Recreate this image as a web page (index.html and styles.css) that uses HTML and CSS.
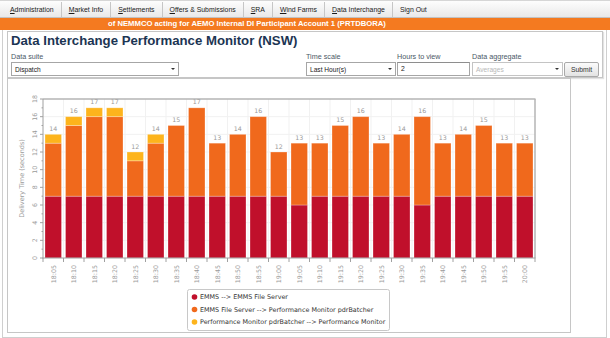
FILE: index.html
```html
<!DOCTYPE html>
<html>
<head>
<meta charset="utf-8">
<link rel="stylesheet" href="styles.css">
</head>
<body>
<div class="nav">
  <a><u>A</u>dministration</a>
  <a><u>M</u>arket Info</a>
  <a><u>S</u>ettlements</a>
  <a><u>O</u>ffers &amp; Submissions</a>
  <a><u>S</u>RA</a>
  <a><u>W</u>ind Farms</a>
  <a><u>D</u>ata Interchange</a>
  <a class="last">Sign Out</a>
</div>
<div class="banner">of NEMMCO acting for AEMO Internal DI Participant Account 1 (PRTDBORA)</div>
<div class="frame">
  <div class="panel head">
    <h1>Data Interchange Performance Monitor (NSW)</h1>
    <div class="form">
      <div class="field suite">
        <label>Data suite</label>
        <div class="select">Dispatch<i class="caret"></i></div>
      </div>
      <div class="right">
        <div class="field time">
          <label>Time scale</label>
          <div class="select">Last Hour(s)<i class="caret"></i></div>
        </div>
        <div class="field hours">
          <label>Hours to view</label>
          <div class="input">2</div>
        </div>
        <div class="field agg">
          <label>Data aggregate</label>
          <div class="select disabled">Averages<i class="caret"></i></div>
        </div>
        <div class="btn">Submit</div>
      </div>
    </div>
  </div>
  <div class="panel chart">
    <svg width="562" height="253" viewBox="0 0 562 253">
      <g class="grid">
        <line x1="35" y1="37.67" x2="527" y2="37.67"/>
        <line x1="35" y1="55.33" x2="527" y2="55.33"/>
        <line x1="35" y1="73" x2="527" y2="73"/>
        <line x1="35" y1="90.67" x2="527" y2="90.67"/>
        <line x1="35" y1="108.33" x2="527" y2="108.33"/>
        <line x1="35" y1="126" x2="527" y2="126"/>
        <line x1="35" y1="143.67" x2="527" y2="143.67"/>
        <line x1="35" y1="161.33" x2="527" y2="161.33"/>
        <line x1="55.5" y1="20" x2="55.5" y2="179"/>
        <line x1="76" y1="20" x2="76" y2="179"/>
        <line x1="96.5" y1="20" x2="96.5" y2="179"/>
        <line x1="117" y1="20" x2="117" y2="179"/>
        <line x1="137.5" y1="20" x2="137.5" y2="179"/>
        <line x1="158" y1="20" x2="158" y2="179"/>
        <line x1="178.5" y1="20" x2="178.5" y2="179"/>
        <line x1="199" y1="20" x2="199" y2="179"/>
        <line x1="219.5" y1="20" x2="219.5" y2="179"/>
        <line x1="240" y1="20" x2="240" y2="179"/>
        <line x1="260.5" y1="20" x2="260.5" y2="179"/>
        <line x1="281" y1="20" x2="281" y2="179"/>
        <line x1="301.5" y1="20" x2="301.5" y2="179"/>
        <line x1="322" y1="20" x2="322" y2="179"/>
        <line x1="342.5" y1="20" x2="342.5" y2="179"/>
        <line x1="363" y1="20" x2="363" y2="179"/>
        <line x1="383.5" y1="20" x2="383.5" y2="179"/>
        <line x1="404" y1="20" x2="404" y2="179"/>
        <line x1="424.5" y1="20" x2="424.5" y2="179"/>
        <line x1="445" y1="20" x2="445" y2="179"/>
        <line x1="465.5" y1="20" x2="465.5" y2="179"/>
        <line x1="486" y1="20" x2="486" y2="179"/>
        <line x1="506.5" y1="20" x2="506.5" y2="179"/>
      </g>
      <g class="frameline">
        <line x1="35" y1="20" x2="527.5" y2="20"/>
        <line x1="527" y1="20" x2="527" y2="179"/>
      </g>
      <g class="bars">
        <rect class="r" x="37" y="117.17" width="16.5" height="61.83"/><rect class="o" x="37" y="64.17" width="16.5" height="53"/><rect class="y" x="37" y="55.33" width="16.5" height="8.84"/>
        <rect class="r" x="57.5" y="117.17" width="16.5" height="61.83"/><rect class="o" x="57.5" y="46.5" width="16.5" height="70.67"/><rect class="y" x="57.5" y="37.67" width="16.5" height="8.83"/>
        <rect class="r" x="78" y="117.17" width="16.5" height="61.83"/><rect class="o" x="78" y="37.67" width="16.5" height="79.5"/><rect class="y" x="78" y="28.83" width="16.5" height="8.84"/>
        <rect class="r" x="98.5" y="117.17" width="16.5" height="61.83"/><rect class="o" x="98.5" y="37.67" width="16.5" height="79.5"/><rect class="y" x="98.5" y="28.83" width="16.5" height="8.84"/>
        <rect class="r" x="119" y="117.17" width="16.5" height="61.83"/><rect class="o" x="119" y="81.83" width="16.5" height="35.34"/><rect class="y" x="119" y="73" width="16.5" height="8.83"/>
        <rect class="r" x="139.5" y="117.17" width="16.5" height="61.83"/><rect class="o" x="139.5" y="64.17" width="16.5" height="53"/><rect class="y" x="139.5" y="55.33" width="16.5" height="8.84"/>
        <rect class="r" x="160" y="117.17" width="16.5" height="61.83"/><rect class="o" x="160" y="46.5" width="16.5" height="70.67"/>
        <rect class="r" x="180.5" y="117.17" width="16.5" height="61.83"/><rect class="o" x="180.5" y="28.83" width="16.5" height="88.34"/>
        <rect class="r" x="201" y="117.17" width="16.5" height="61.83"/><rect class="o" x="201" y="64.17" width="16.5" height="53"/>
        <rect class="r" x="221.5" y="117.17" width="16.5" height="61.83"/><rect class="o" x="221.5" y="55.33" width="16.5" height="61.84"/>
        <rect class="r" x="242" y="117.17" width="16.5" height="61.83"/><rect class="o" x="242" y="37.67" width="16.5" height="79.5"/>
        <rect class="r" x="262.5" y="117.17" width="16.5" height="61.83"/><rect class="o" x="262.5" y="73" width="16.5" height="44.17"/>
        <rect class="r" x="283" y="126" width="16.5" height="53"/><rect class="o" x="283" y="64.17" width="16.5" height="61.83"/>
        <rect class="r" x="303.5" y="117.17" width="16.5" height="61.83"/><rect class="o" x="303.5" y="64.17" width="16.5" height="53"/>
        <rect class="r" x="324" y="117.17" width="16.5" height="61.83"/><rect class="o" x="324" y="46.5" width="16.5" height="70.67"/>
        <rect class="r" x="344.5" y="117.17" width="16.5" height="61.83"/><rect class="o" x="344.5" y="37.67" width="16.5" height="79.5"/>
        <rect class="r" x="365" y="117.17" width="16.5" height="61.83"/><rect class="o" x="365" y="64.17" width="16.5" height="53"/>
        <rect class="r" x="385.5" y="117.17" width="16.5" height="61.83"/><rect class="o" x="385.5" y="55.33" width="16.5" height="61.84"/>
        <rect class="r" x="406" y="126" width="16.5" height="53"/><rect class="o" x="406" y="37.67" width="16.5" height="88.33"/>
        <rect class="r" x="426.5" y="117.17" width="16.5" height="61.83"/><rect class="o" x="426.5" y="64.17" width="16.5" height="53"/>
        <rect class="r" x="447" y="117.17" width="16.5" height="61.83"/><rect class="o" x="447" y="55.33" width="16.5" height="61.84"/>
        <rect class="r" x="467.5" y="117.17" width="16.5" height="61.83"/><rect class="o" x="467.5" y="46.5" width="16.5" height="70.67"/>
        <rect class="r" x="488" y="117.17" width="16.5" height="61.83"/><rect class="o" x="488" y="64.17" width="16.5" height="53"/>
        <rect class="r" x="508.5" y="117.17" width="16.5" height="61.83"/><rect class="o" x="508.5" y="64.17" width="16.5" height="53"/>
      </g>
      <g class="vals">
        <text x="45.25" y="51.8">14</text>
        <text x="65.75" y="34.2">16</text>
        <text x="86.25" y="25.3">17</text>
        <text x="106.75" y="25.3">17</text>
        <text x="127.25" y="69.5">12</text>
        <text x="147.75" y="51.8">14</text>
        <text x="168.25" y="43">15</text>
        <text x="188.75" y="25.3">17</text>
        <text x="209.25" y="60.7">13</text>
        <text x="229.75" y="51.8">14</text>
        <text x="250.25" y="34.2">16</text>
        <text x="270.75" y="69.5">12</text>
        <text x="291.25" y="60.7">13</text>
        <text x="311.75" y="60.7">13</text>
        <text x="332.25" y="43">15</text>
        <text x="352.75" y="34.2">16</text>
        <text x="373.25" y="60.7">13</text>
        <text x="393.75" y="51.8">14</text>
        <text x="414.25" y="34.2">16</text>
        <text x="434.75" y="60.7">13</text>
        <text x="455.25" y="51.8">14</text>
        <text x="475.75" y="43">15</text>
        <text x="496.25" y="60.7">13</text>
        <text x="516.75" y="60.7">13</text>
      </g>
      <g class="axis">
        <line x1="35" y1="20" x2="35" y2="179.5"/>
        <line x1="34.5" y1="179" x2="527.5" y2="179"/>
        <path d="M32 179H35M32 161.33H35M32 143.67H35M32 126H35M32 108.33H35M32 90.67H35M32 73H35M32 55.33H35M32 37.67H35M32 20H35"/>
        <path d="M33.5 170.17H35M33.5 152.5H35M33.5 134.83H35M33.5 117.17H35M33.5 99.5H35M33.5 81.83H35M33.5 64.17H35M33.5 46.5H35M33.5 28.83H35"/>
        <path d="M35 179V183M55.5 179V183M76 179V183M96.5 179V183M117 179V183M137.5 179V183M158 179V183M178.5 179V183M199 179V183M219.5 179V183M240 179V183M260.5 179V183M281 179V183M301.5 179V183M322 179V183M342.5 179V183M363 179V183M383.5 179V183M404 179V183M424.5 179V183M445 179V183M465.5 179V183M486 179V183M506.5 179V183M527 179V183"/>
      </g>
      <g class="ylab">
        <text transform="translate(28.5 179) rotate(-90)">0</text>
        <text transform="translate(28.5 161.33) rotate(-90)">2</text>
        <text transform="translate(28.5 143.67) rotate(-90)">4</text>
        <text transform="translate(28.5 126) rotate(-90)">6</text>
        <text transform="translate(28.5 108.33) rotate(-90)">8</text>
        <text transform="translate(28.5 90.67) rotate(-90)">10</text>
        <text transform="translate(28.5 73) rotate(-90)">12</text>
        <text transform="translate(28.5 55.33) rotate(-90)">14</text>
        <text transform="translate(28.5 37.67) rotate(-90)">16</text>
        <text transform="translate(28.5 20) rotate(-90)">18</text>
      </g>
      <text class="ytitle" transform="translate(15.5 99.5) rotate(-90)">Delivery Time (seconds)</text>
      <g class="xlab">
        <text transform="translate(47.5 186) rotate(-90)">18:05</text>
        <text transform="translate(68 186) rotate(-90)">18:10</text>
        <text transform="translate(88.5 186) rotate(-90)">18:15</text>
        <text transform="translate(109 186) rotate(-90)">18:20</text>
        <text transform="translate(129.5 186) rotate(-90)">18:25</text>
        <text transform="translate(150 186) rotate(-90)">18:30</text>
        <text transform="translate(170.5 186) rotate(-90)">18:35</text>
        <text transform="translate(191 186) rotate(-90)">18:40</text>
        <text transform="translate(211.5 186) rotate(-90)">18:45</text>
        <text transform="translate(232 186) rotate(-90)">18:50</text>
        <text transform="translate(252.5 186) rotate(-90)">18:55</text>
        <text transform="translate(273 186) rotate(-90)">19:00</text>
        <text transform="translate(293.5 186) rotate(-90)">19:05</text>
        <text transform="translate(314 186) rotate(-90)">19:10</text>
        <text transform="translate(334.5 186) rotate(-90)">19:15</text>
        <text transform="translate(355 186) rotate(-90)">19:20</text>
        <text transform="translate(375.5 186) rotate(-90)">19:25</text>
        <text transform="translate(396 186) rotate(-90)">19:30</text>
        <text transform="translate(416.5 186) rotate(-90)">19:35</text>
        <text transform="translate(437 186) rotate(-90)">19:40</text>
        <text transform="translate(457.5 186) rotate(-90)">19:45</text>
        <text transform="translate(478 186) rotate(-90)">19:50</text>
        <text transform="translate(498.5 186) rotate(-90)">19:55</text>
        <text transform="translate(519 186) rotate(-90)">20:00</text>
      </g>
      <g class="legend">
        <rect class="lbox" x="179.5" y="210.5" width="202" height="41" rx="2"/>
        <circle class="r" cx="186.5" cy="218" r="2.8"/>
        <circle class="o" cx="186.5" cy="230.5" r="2.8"/>
        <circle class="y" cx="186.5" cy="243" r="2.8"/>
        <text x="192" y="220.3">EMMS --&gt; EMMS File Server</text>
        <text x="192" y="232.8">EMMS File Server --&gt; Performance Monitor pdrBatcher</text>
        <text x="192" y="245.3">Performance Monitor pdrBatcher --&gt; Performance Monitor</text>
      </g>
    </svg>
  </div>
</div>
</body>
</html>
```
FILE: styles.css
```css
* { box-sizing: border-box; }
body {
  margin: 0;
  font-family: "Liberation Sans", Arial, sans-serif;
  background: #fff;
}
.nav {
  height: 18px;
  display: flex;
  align-items: center;
  padding-left: 3px;
  background: linear-gradient(#fdfdfd, #e9e9e9);
  border-top: 1px solid #d6d6d6;
  border-bottom: 1px solid #c2c2c2;
}
.nav a {
  font-size: 6.9px;
  color: #1a1a1a;
  padding: 0 7px;
  line-height: 15px;
  border-right: 1px solid #c6c6c6;
  white-space: nowrap;
}
.nav a u { text-decoration: underline; }
.nav a.last { border-right: 0; }
.banner {
  height: 12px;
  background: #f47a20;
  color: #fff;
  font-weight: bold;
  font-size: 7.7px;
  line-height: 12px;
  padding-left: 108px;
  white-space: nowrap;
  overflow: hidden;
}
.frame {
  margin-left: 2px;
  width: 605px;
  height: 308px;
  border: 1px solid #cfcfcf;
  border-top: 0;
  padding: 1px 0 0 4px;
}
.panel {
  border: 1px solid #c6c6c6;
  background: #fff;
}
.head {
  width: 596px;
  height: 47px;
  padding: 1px 3px 1px 3px;
  box-shadow: 1px 1px 1px #e2e2e2;
}
h1 {
  margin: 0 0 3px;
  font-size: 13.2px;
  line-height: 16px;
  color: #1c3553;
  white-space: nowrap;
}
.form {
  display: flex;
  justify-content: space-between;
  align-items: flex-end;
}
.field label {
  display: block;
  font-size: 7.2px;
  line-height: 9px;
  color: #4a5866;
  margin-bottom: 1px;
  white-space: nowrap;
}
.select {
  height: 14px;
  border: 1px solid #a6a6a6;
  display: flex;
  align-items: center;
  justify-content: space-between;
  padding: 0 3px 0 3px;
  font-size: 6.6px;
  color: #222;
  background: #fff;
}
.select.disabled { color: #b8b8b8; border-color: #c4c4c4; }
.caret {
  width: 0;
  height: 0;
  border-left: 2px solid transparent;
  border-right: 2px solid transparent;
  border-top: 2.5px solid #333;
}
.suite { width: 168px; }
.right { display: flex; align-items: flex-end; }
.time { width: 90px; margin-right: 1px; }
.hours { width: 73px; margin-right: 2px; }
.agg { width: 91px; margin-right: 1px; }
.input {
  height: 14px;
  border: 1px solid #a6a6a6;
  border-top-color: #8e8e8e;
  font-size: 6.8px;
  line-height: 12px;
  padding-left: 3px;
  color: #222;
}
.btn {
  width: 35px;
  height: 15px;
  border: 1px solid #a9a9a9;
  border-radius: 2px;
  background: linear-gradient(#fbfbfb, #e3e3e3);
  font-size: 6.8px;
  line-height: 13px;
  text-align: center;
  color: #333;
  margin-bottom: -1px;
}
.chart {
  width: 564px;
  height: 255px;
}
.chart svg { display: block; }
.grid line { stroke: #f1f1f1; stroke-width: 1; }
.frameline line { stroke: #b4b4b4; stroke-width: 1.5; }
.bars .r, .legend .r { fill: #c0102b; }
.bars .o, .legend .o { fill: #f0691c; }
.bars .y, .legend .y { fill: #fdb41c; }
.bars rect { stroke: #ffffff; stroke-opacity: 0.35; stroke-width: 0.8; }
.vals text, .ylab text, .xlab text, .ytitle {
  font-family: "DejaVu Sans", Verdana, sans-serif;
  font-size: 6.3px;
  fill: #9a9a9a;
}
.vals text, .ylab text, .ytitle { text-anchor: middle; }
.xlab text { text-anchor: end; }
.ytitle { font-size: 6.5px; }
.axis line, .axis path { stroke: #a0a0a0; stroke-width: 1; fill: none; }
.lbox { fill: #fff; stroke: #c8c8c8; stroke-width: 1; }
.legend text {
  font-family: "DejaVu Sans", Verdana, sans-serif;
  font-size: 6.4px;
  fill: #333;
}
```
